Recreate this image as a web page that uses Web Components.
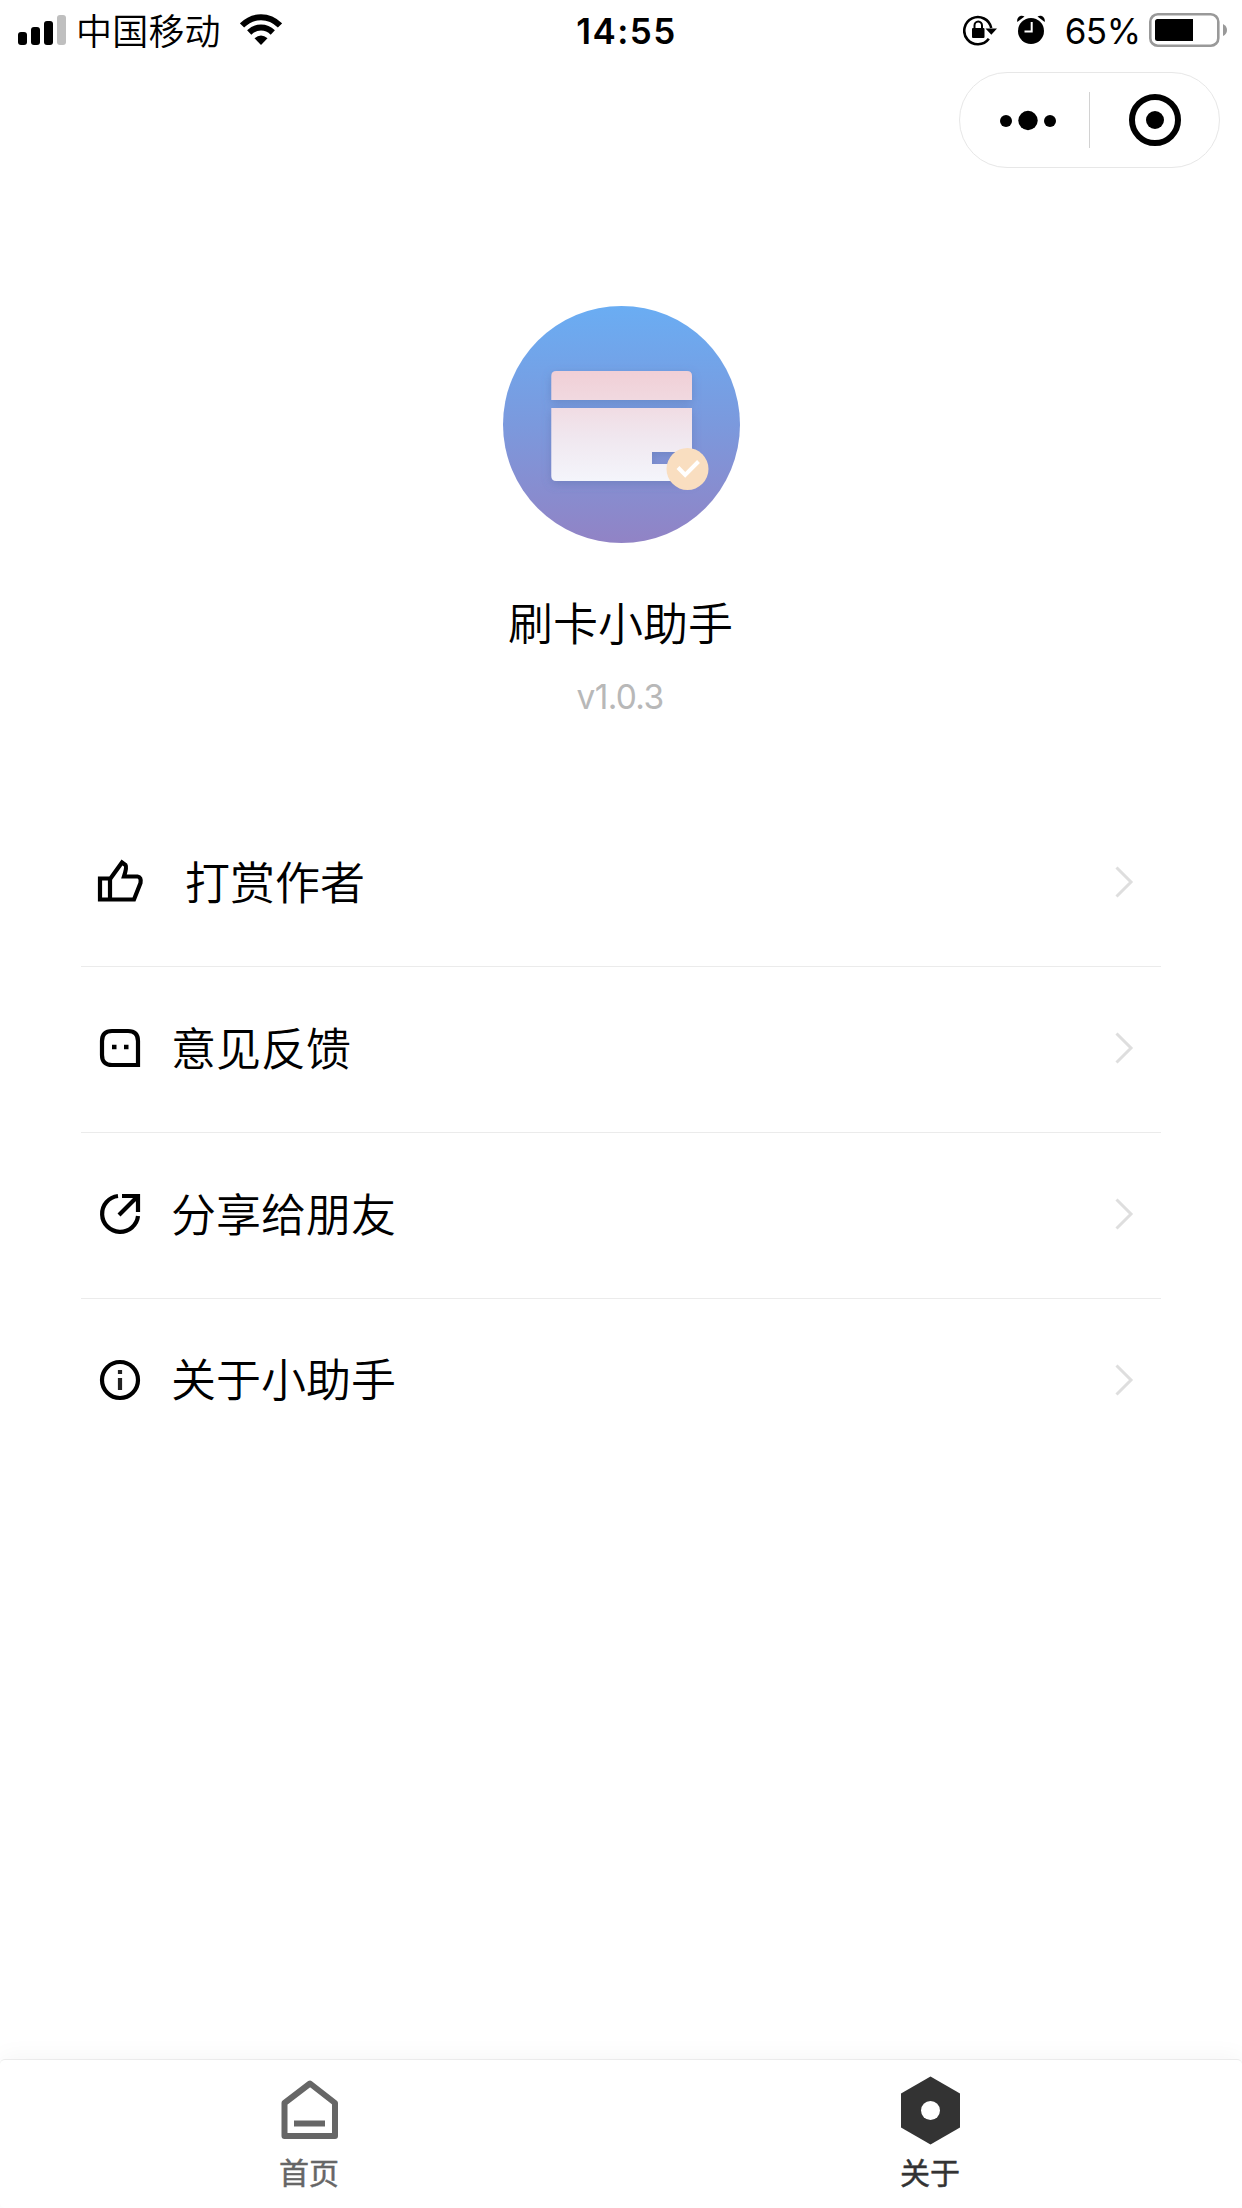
<!DOCTYPE html>
<html lang="zh-CN">
<head>
<meta charset="utf-8">
<title>刷卡小助手</title>
<style>
html,body{margin:0;height:100%}
body{background:#fff;color:#000;font-family:Inter,"Noto Sans CJK SC",sans-serif}
</style>
</head>
<body>
<about-page></about-page>
<script>
function define(name, html) {
  customElements.define(name, class extends HTMLElement {
    constructor() {
      super();
      this.attachShadow({mode: 'open'}).innerHTML = '<style>*{box-sizing:border-box}svg{display:block;flex:none}</style>' + html;
    }
  });
}

define('status-bar', `
<style>
:host{display:flex;height:60px;padding:0 14px 0 18px;align-items:flex-start;justify-content:space-between;line-height:60px}
.left,.right{display:flex;flex:1;align-items:flex-start}
.right{justify-content:flex-end}
.carrier{font:350 36px/62px "Noto Sans CJK SC",sans-serif;margin:-2px 0 0 10px;letter-spacing:.2px}
.wifi{margin-left:19px}
.time{font-size:35px;font-weight:600;line-height:60px;margin-top:1px;padding-left:7px;letter-spacing:1.400px}
.pct{font-size:35px;line-height:60px;margin:1px 8.500px 0 20px;letter-spacing:-.5px}
</style>
<div class="left">
<svg width="48" height="60"><rect y="32" width="9" height="13" rx="3"/><rect x="13" y="27" width="9" height="18" rx="3"/><rect x="26" y="21" width="9" height="24" rx="3"/><rect x="39" y="15" width="9" height="30" rx="3" fill="#bfbfbf"/></svg>
<span class="carrier">中国移动</span>
<svg class="wifi" width="42" height="60"><g fill="none" stroke="#000" stroke-width="6"><path d="M2 25.500C13 14.500 29 14.500 40 25.500"/><path d="M9.200 32.500C16 25.800 26 25.800 32.800 32.500"/></g><path d="M14.500 38.300Q21 32.700 27.500 38.300L21 45Z"/></svg>
</div>
<span class="time">14:55</span>
<div class="right">
<svg width="34" height="60"><path d="M25.800 38.800A13.600 13.600 0 1 1 28.200 28" fill="none" stroke="#000" stroke-width="2.600"/><path d="M22.500 28.500H34L28.300 34.800Z"/><rect x="9" y="28" width="12.500" height="10" rx="1"/><path d="M11.500 29V25.500a3.700 4 0 0 1 7.500 0V29" fill="none" stroke="#000" stroke-width="2"/></svg>
<svg width="28" height="60" style="margin-left:20px"><circle cx="14" cy="31" r="13"/><path d="M14.700 22V31.500H7.500" fill="none" stroke="#fff" stroke-width="2"/><path d="M.3 22C-.6 17.500 3.500 14 7.500 16.500ZM27.700 22C28.600 17.500 24.500 14 20.500 16.500Z"/></svg>
<span class="pct">65%</span>
<svg width="79" height="60"><rect x="1.300" y="14.300" width="68" height="31.400" rx="7.500" fill="none" stroke="#999" stroke-width="2.600"/><rect x="6" y="19" width="38" height="22" rx="2.500"/><rect x="40" y="19" width="4" height="22"/><path d="M74 24q4 2 4 6t-4 6Z" fill="#999"/></svg>
</div>`);

define('capsule-menu', `
<style>:host{display:flex;width:261px;height:96px;border:1px solid #e7e7e7;border-radius:48px;align-items:center;margin:12px 22px 0 auto}
i{width:1px;height:56px;background:#d2d2d2}</style>
<svg width="129" height="94"><circle cx="46" cy="48" r="6"/><circle cx="68" cy="47.500" r="9.700"/><circle cx="90" cy="48" r="6"/></svg><i></i>
<svg width="129" height="94"><circle cx="65" cy="47" r="23" fill="none" stroke="#000" stroke-width="6"/><circle cx="65" cy="47" r="9"/></svg>`);

define('app-profile', `
<style>:host{display:flex;flex-direction:column;align-items:center;margin-top:138px}
h1{font:350 45px/66px "Noto Sans CJK SC",sans-serif;margin:46px 0 0;padding-right:1px}
p{font-size:33.500px;font-weight:400;line-height:50px;color:#b8b8b8;margin:17px 0 0;padding-right:2px;letter-spacing:-.7px}</style>
<svg width="237" height="237" viewBox="0 0 237 237">
<defs><linearGradient id="sky" x2="0" y2="1"><stop stop-color="#6aadf3"/><stop offset=".5" stop-color="#7b99dd"/><stop offset="1" stop-color="#9183c5"/></linearGradient>
<linearGradient id="card" gradientUnits="userSpaceOnUse" x1="0" y1="65" x2="0" y2="175"><stop stop-color="#f0cfd6"/><stop offset=".24" stop-color="#f1d8df"/><stop offset=".6" stop-color="#f0e7ef"/><stop offset="1" stop-color="#f4f5fb"/></linearGradient>
<filter id="soft" x="-20%" y="-20%" width="140%" height="140%"><feDropShadow dx="0" dy="3" stdDeviation="5" flood-color="#526aa5" flood-opacity=".4"/></filter></defs>
<circle cx="118.500" cy="118.500" r="118.500" fill="url(#sky)"/>
<g fill="url(#card)" filter="url(#soft)"><path d="M48.300 94V70q0-5 5-5H184q5 0 5 5V94Z"/><path fill-rule="evenodd" d="M48.300 102H189V175H53.300q-5 0-5-5ZM149 146V158H189V146Z"/></g>
<circle cx="184.500" cy="163" r="21" fill="#f9dec0"/><path d="M175 161.500L182.200 169L195.500 155.500" fill="none" stroke="#fff" stroke-width="4"/>
</svg><h1>刷卡小助手</h1><p>v1.0.3</p>`);

define('menu-row', `
<style>:host{display:flex;height:166px;align-items:center;border-bottom:1px solid #ebebeb;padding:0 25px 3px 16px}
:host([last]){border-color:transparent}
.label{flex:1;font:350 45px/66px "Noto Sans CJK SC",sans-serif;padding-left:26px;margin-top:-3px}
:host([last]) .label{margin-top:-5px}
:host([wide]) .label{padding-left:40px}</style>
<slot name="icon"></slot><span class="label"><slot></slot></span>
<svg width="24" height="34" fill="none" stroke="#dedede" stroke-width="3"><path d="M4.500 2.500L19 17L4.500 31.500"/></svg>`);

define('menu-list', `
<style>:host{display:block;margin:79px 81px 0}svg{display:block;flex:none;fill:none;stroke:#000;stroke-width:4.200}</style>
<menu-row wide><svg slot="icon" width="48" height="48"><path d="M3.500 14.500H14L25.500 -1.500L29 1Q30.500 3 27.500 12.500H41Q45 13 44 19L37.500 35.500H3.500Z" transform="translate(-.5 6)"/><path d="M13 20.500V41.500"/></svg>打赏作者</menu-row>
<menu-row><svg slot="icon" width="48" height="48"><path d="M41 41H15Q5 41 5 31V17Q5 7 15 7H31Q41 7 41 17Z"/><path d="M15 23H19.500M27 23H31.500" stroke-width="4.500"/></svg>意见反馈</menu-row>
<menu-row><svg slot="icon" width="48" height="48"><path d="M21 6A18 18 0 1 0 41 26M25 6H41V22M41 6L22 25"/></svg>分享给朋友</menu-row>
<menu-row last><svg slot="icon" width="48" height="48"><circle cx="23" cy="24" r="18"/><path d="M23 14V18M23 22V34" stroke="#222"/></svg>关于小助手</menu-row>`);

define('tab-item', `
<style>:host{display:flex;flex:1;flex-direction:column;align-items:center;color:#666;padding-right:2px}
:host([active]){color:#333}
span{font:400 30px/44px "Noto Sans CJK SC",sans-serif;-webkit-text-stroke:.5px currentColor;margin-top:-2px;padding-right:1px}</style>
<slot name="icon"></slot><span><slot></slot></span>`);

define('tab-bar', `
<style>:host{display:flex;height:149px;margin-top:auto;background:#fff;border-top:1px solid #ebebeb;border-radius:5px;box-shadow:0 -2px 24px rgba(0,0,0,.045);padding-top:12px}</style>
<tab-item><svg slot="icon" width="72" height="79"><path d="M36 11.500L61 31V64H10.500V31Z" fill="none" stroke="#666" stroke-width="6" stroke-linejoin="round"/><path d="M20 51.500H51" stroke="#666" stroke-width="6"/></svg>首页</tab-item>
<tab-item active><svg slot="icon" width="72" height="79"><path fill="#333" d="M35.500 4.500L65 21.500V55.500L35.500 72.500L6 55.500V21.500Z"/><circle cx="35.500" cy="38.500" r="9.500" fill="#fff"/></svg>关于</tab-item>`);

define('about-page', `
<style>:host{display:flex;flex-direction:column;width:1242px;height:2208px;overflow:hidden;background:#fff}</style>
<status-bar></status-bar><capsule-menu></capsule-menu><app-profile></app-profile><menu-list></menu-list><tab-bar></tab-bar>`);
</script>
</body>
</html>
